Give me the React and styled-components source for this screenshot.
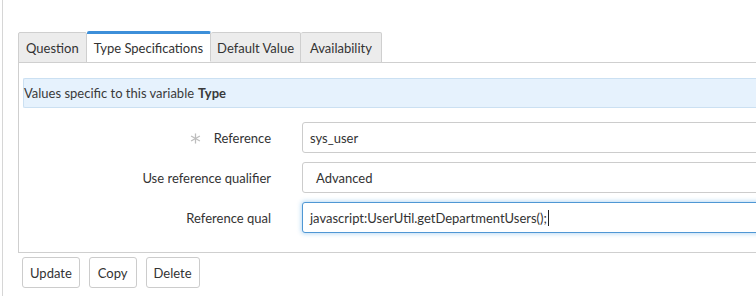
import React from "react";
import styled, { createGlobalStyle } from "styled-components";

const GlobalStyle = createGlobalStyle`
  html, body {
    margin: 0;
    padding: 0;
    background: #fff;
    overflow: hidden;
  }
  body {
    font-family: Lato, "Open Sans", "Liberation Sans", sans-serif;
    font-size: 13px;
    color: #333;
  }
`;

const Page = styled.div`
  width: 1000px;
  height: 296px;
  margin-left: 2px;
  border-left: 1px solid #d6d6d6;
  padding: 32px 0 0 15px;
  box-sizing: border-box;
`;

/* 탭 영역 */
const TabBar = styled.div`
  display: flex;
  height: 30px;
`;

const Tab = styled.div`
  display: flex;
  align-items: center;
  box-sizing: border-box;
  height: 31px;
  padding: 0 ${(p) => p.$pad}px;
  border: 1px solid #cfcfcf;
  border-left: ${(p) => (p.$first ? "1px solid #cfcfcf" : "none")};
  border-top: ${(p) => (p.$active ? "3px solid #3d8fd9" : "1px solid #cfcfcf")};
  border-bottom: ${(p) => (p.$active ? "1px solid #fff" : "1px solid #cfcfcf")};
  background: ${(p) => (p.$active ? "#fff" : "#ececec")};
  border-radius: 2px 2px 0 0;
  margin-top: ${(p) => (p.$active ? "-1px" : "0")};
  color: #333;
  white-space: nowrap;
  position: relative;
  z-index: 1;
`;

/* 본문 패널 */
const Panel = styled.div`
  border: 1px solid #cfcfcf;
  border-right: none;
  padding: 15px 0 19px 4px;
`;

const InfoBar = styled.div`
  height: 28px;
  display: flex;
  align-items: center;
  background: #e6f2fd;
  border: 1px solid #cbe0f2;
  border-right: none;
  border-radius: 2px 0 0 2px;
  color: #3a3a3a;
  margin-bottom: 14px;
  b {
    font-weight: 700;
    margin-left: 4px;
  }
`;

const Form = styled.div`
  display: flex;
  flex-direction: column;
  gap: 9px;
`;

const Row = styled.div`
  display: flex;
  align-items: center;
  height: 31px;
`;

const LabelCell = styled.div`
  width: 248px;
  display: flex;
  justify-content: flex-end;
  align-items: center;
  gap: 13px;
  color: #333;
`;

const Mandatory = styled.svg`
  width: 11px;
  height: 11px;
  stroke: #bdbdbd;
  stroke-width: 1.4;
  margin-top: 1px;
`;

const Field = styled.div`
  margin-left: 31px;
  width: 520px;
  height: 31px;
  box-sizing: border-box;
  display: flex;
  align-items: center;
  padding-left: ${(p) => (p.$select ? "13px" : "7px")};
  border: 1px solid ${(p) => (p.$focus ? "#4f97d4" : "#cccccc")};
  border-radius: 3px;
  background: #fff;
  box-shadow: ${(p) =>
    p.$focus ? "0 0 4px 1px rgba(102, 175, 233, 0.45)" : "none"};
  color: #333;
  white-space: nowrap;
`;

const Caret = styled.span`
  display: inline-block;
  width: 1px;
  height: 16px;
  background: #222;
  margin-left: 1px;
`;

/* 하단 버튼 영역 */
const ButtonRow = styled.div`
  display: flex;
  gap: 9px;
  margin: 4px 0 0 4px;
`;

const Button = styled.button`
  height: 31px;
  padding: 0 ${(p) => p.$pad}px;
  border: 1px solid #cccccc;
  border-radius: 3px;
  background: #fff;
  font-family: inherit;
  font-size: 13px;
  color: #333;
`;

const App = () => {
  return (
    <>
      <GlobalStyle />
      <Page>
        <TabBar>
          <Tab $first $pad={7}>Question</Tab>
          <Tab $active $pad={7}>Type Specifications</Tab>
          <Tab $pad={6}>Default Value</Tab>
          <Tab $pad={9}>Availability</Tab>
        </TabBar>
        <Panel>
          <InfoBar>
            Values specific to this variable <b>Type</b>
          </InfoBar>
          <Form>
            <Row>
              <LabelCell>
                <Mandatory viewBox="0 0 12 12">
                  <line x1="6" y1="0.5" x2="6" y2="11.5" />
                  <line x1="1.2" y1="3.2" x2="10.8" y2="8.8" />
                  <line x1="1.2" y1="8.8" x2="10.8" y2="3.2" />
                </Mandatory>
                Reference
              </LabelCell>
              <Field>sys_user</Field>
            </Row>
            <Row>
              <LabelCell>Use reference qualifier</LabelCell>
              <Field $select>Advanced</Field>
            </Row>
            <Row>
              <LabelCell>Reference qual</LabelCell>
              <Field $focus>
                javascript:UserUtil.getDepartmentUsers();
                <Caret />
              </Field>
            </Row>
          </Form>
        </Panel>
        <ButtonRow>
          <Button $pad={7}>Update</Button>
          <Button $pad={8}>Copy</Button>
          <Button $pad={7}>Delete</Button>
        </ButtonRow>
      </Page>
    </>
  );
};

export default App;
